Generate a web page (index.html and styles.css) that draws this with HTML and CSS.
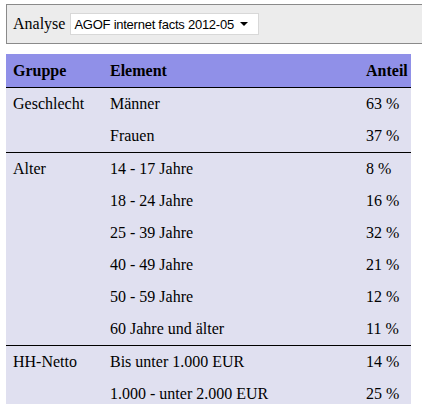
FILE: index.html
```html
<!DOCTYPE html>
<html>
<head>
<meta charset="utf-8">
<link rel="stylesheet" href="styles.css">
</head>
<body>
<div class="toolbar">
  <span class="label">Analyse</span>
  <div class="select"><span class="select-text">AGOF internet facts 2012-05</span><span class="arrow"></span></div>
</div>
<table class="data">
  <colgroup><col class="c1"><col class="c2"><col class="c3"></colgroup>
  <thead>
    <tr><th>Gruppe</th><th>Element</th><th>Anteil</th></tr>
  </thead>
  <tbody>
    <tr><td>Geschlecht</td><td>Männer</td><td>63 %</td></tr>
    <tr class="last"><td></td><td>Frauen</td><td>37 %</td></tr>
    <tr><td>Alter</td><td>14 - 17 Jahre</td><td>8 %</td></tr>
    <tr><td></td><td>18 - 24 Jahre</td><td>16 %</td></tr>
    <tr><td></td><td>25 - 39 Jahre</td><td>32 %</td></tr>
    <tr><td></td><td>40 - 49 Jahre</td><td>21 %</td></tr>
    <tr><td></td><td>50 - 59 Jahre</td><td>12 %</td></tr>
    <tr class="last"><td></td><td>60 Jahre und älter</td><td>11 %</td></tr>
    <tr><td>HH-Netto</td><td>Bis unter 1.000 EUR</td><td>14 %</td></tr>
    <tr><td></td><td>1.000 - unter 2.000 EUR</td><td>25 %</td></tr>
  </tbody>
</table>
</body>
</html>
```

FILE: styles.css
```css
html, body {
  margin: 0;
  padding: 0;
  background: #ffffff;
  overflow: hidden;
}
body {
  padding: 4px 0 0 6px;
  font-family: "Liberation Serif", "Times New Roman", serif;
  font-size: 16px;
  color: #000;
  width: 440px;
}
.toolbar {
  display: flex;
  align-items: center;
  height: 40px;
  border: 1px solid #8a8a8a;
  background: #ececec;
  padding-left: 6px;
  box-sizing: border-box;
  width: 430px;
}
.label {
  margin-right: 5px;
}
.select {
  display: flex;
  align-items: center;
  width: 189px;
  height: 22px;
  box-sizing: border-box;
  background: #fff;
  border: 1px solid #d8d8d8;
  font-family: "Liberation Sans", Arial, sans-serif;
  font-size: 13px;
  letter-spacing: -0.25px;
  padding-left: 3px;
}
.select-text {
  flex: 1;
}
.arrow {
  width: 0;
  height: 0;
  border-left: 4px solid transparent;
  border-right: 4px solid transparent;
  border-top: 4px solid #000;
  margin-right: 10px;
}
.data {
  margin-top: 10px;
  border-collapse: collapse;
  table-layout: fixed;
  width: 405px;
  background: #e0e0f0;
}
.c1 { width: 97px; }
.c2 { width: 263px; }
.c3 { width: 45px; }
.data th {
  background: #9090e8;
  text-align: left;
  font-weight: bold;
  height: 33px;
  padding: 0 7px;
  border-bottom: 1px solid #000;
  white-space: nowrap;
}
.data th:last-child,
.data td:last-child {
  padding: 0;
}
.data td {
  height: 32px;
  padding: 0 7px;
  line-height: 18px;
  vertical-align: middle;
  white-space: nowrap;
}
.data tr.last td {
  border-bottom: 1px solid #000;
}
```
